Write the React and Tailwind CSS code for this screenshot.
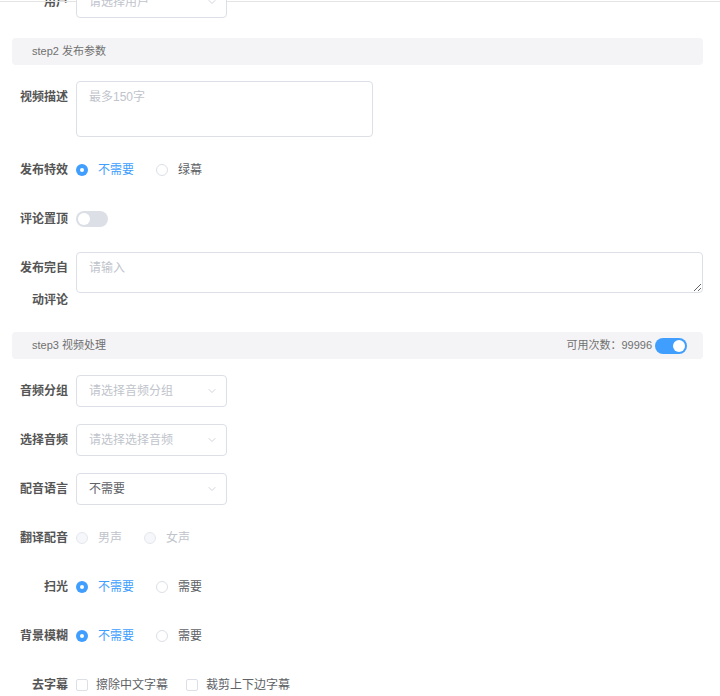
import { ChevronDown } from "lucide-react";

const font = { fontFamily: '"Liberation Sans", "Noto Sans CJK SC", sans-serif' };

const Label = ({ children }) => (
  <div className="w-[64px] shrink-0 pr-2 text-right text-[12px] leading-[32px] font-semibold text-[#555]">
    {children}
  </div>
);

const Select = ({ value, placeholder }) => (
  <div className="relative z-10 flex h-[32px] w-[151px] items-center justify-between rounded border border-[#dcdfe6] bg-white pl-3 pr-2">
    <span className={value ? "text-[12px] text-[#606266]" : "text-[12px] text-[#c0c4cc]"}>{value || placeholder}</span>
    <ChevronDown size={12} strokeWidth={1.5} className="text-[#c0c4cc]" />
  </div>
);

const Radio = ({ checked, disabled, children }) => (
  <label className="flex items-center gap-[10px]">
    {checked ? (
      <span className="flex h-[12px] w-[12px] items-center justify-center rounded-full bg-[#409eff]">
        <span className="h-[4px] w-[4px] rounded-full bg-white" />
      </span>
    ) : (
      <span
        className={
          disabled
            ? "h-[12px] w-[12px] rounded-full border border-[#e4e7ed] bg-[#f5f7fa]"
            : "h-[12px] w-[12px] rounded-full border border-[#dcdfe6] bg-white"
        }
      />
    )}
    <span
      className={
        checked ? "text-[12px] text-[#409eff]" : disabled ? "text-[12px] text-[#c0c4cc]" : "text-[12px] text-[#606266]"
      }
    >
      {children}
    </span>
  </label>
);

const Checkbox = ({ children }) => (
  <label className="flex items-center gap-[8px]">
    <span className="h-[12px] w-[12px] rounded-[2px] border border-[#dcdfe6] bg-white" />
    <span className="text-[12px] text-[#606266]">{children}</span>
  </label>
);

const Switch = ({ on }) =>
  on ? (
    <span className="flex h-[16px] w-[32px] items-center justify-end rounded-full bg-[#409eff] px-[2px]">
      <span className="h-[12px] w-[12px] rounded-full bg-white" />
    </span>
  ) : (
    <span className="flex h-[16px] w-[32px] items-center rounded-full bg-[#dcdfe6] px-[2px]">
      <span className="h-[12px] w-[12px] rounded-full bg-white" />
    </span>
  );

const Row = ({ label, className = "mt-[17px]", children }) => (
  <div className={"flex " + className}>
    <Label>{label}</Label>
    <div className="flex min-h-[32px] flex-1 items-center">{children}</div>
  </div>
);

const Header = ({ title, right, className }) => (
  <div className={"flex h-[27px] items-center justify-between rounded-sm bg-[#f4f4f6] pl-5 pr-4 " + className}>
    <span className="text-[11px] text-[#707070]">{title}</span>
    {right}
  </div>
);

export default function App() {
  return (
    <div style={font} className="relative h-[696px] w-[720px] overflow-hidden bg-white">
      {/* top edge line */}
      <div className="absolute left-0 top-[1px] h-px w-full bg-[#e4e4e4]" />

      <div className="flex w-[703px] flex-col pl-3">
        <Row label="用户" className="-mt-[14px]">
          <Select placeholder="请选择用户" />
        </Row>

        <Header title="step2 发布参数" className="mt-[20px]" />

        <div className="mt-[16px] flex">
          <Label>视频描述</Label>
          <textarea
            placeholder="最多150字"
            className="h-[56px] w-[297px] resize-none rounded border border-[#dcdfe6] px-3 py-[5px] text-[12px] leading-5 outline-none placeholder:text-[#c0c4cc]"
          />
        </div>

        <Row label="发布特效">
          <div className="flex items-center gap-[22px]">
            <Radio checked>不需要</Radio>
            <Radio>绿幕</Radio>
          </div>
        </Row>

        <Row label="评论置顶">
          <Switch />
        </Row>

        <div className="mt-[17px] flex">
          <Label>发布完自动评论</Label>
          <textarea
            placeholder="请输入"
            className="h-[41px] flex-1 rounded border border-[#dcdfe6] px-3 py-[5px] text-[12px] leading-5 outline-none placeholder:text-[#c0c4cc]"
          />
        </div>

        <Header
          title="step3 视频处理"
          className="mt-[16px]"
          right={
            <div className="flex items-center gap-[3px]">
              <span className="text-[11px] text-[#707070]">可用次数：99996</span>
              <Switch on />
            </div>
          }
        />

        <Row label="音频分组" className="mt-[16px]">
          <Select placeholder="请选择音频分组" />
        </Row>
        <Row label="选择音频">
          <Select placeholder="请选择选择音频" />
        </Row>
        <Row label="配音语言">
          <Select value="不需要" />
        </Row>

        <Row label="翻译配音">
          <div className="flex items-center gap-[22px]">
            <Radio disabled>男声</Radio>
            <Radio disabled>女声</Radio>
          </div>
        </Row>

        <Row label="扫光">
          <div className="flex items-center gap-[22px]">
            <Radio checked>不需要</Radio>
            <Radio>需要</Radio>
          </div>
        </Row>

        <Row label="背景模糊">
          <div className="flex items-center gap-[22px]">
            <Radio checked>不需要</Radio>
            <Radio>需要</Radio>
          </div>
        </Row>

        <Row label="去字幕">
          <div className="flex items-center gap-[18px]">
            <Checkbox>擦除中文字幕</Checkbox>
            <Checkbox>裁剪上下边字幕</Checkbox>
          </div>
        </Row>
      </div>
    </div>
  );
}
